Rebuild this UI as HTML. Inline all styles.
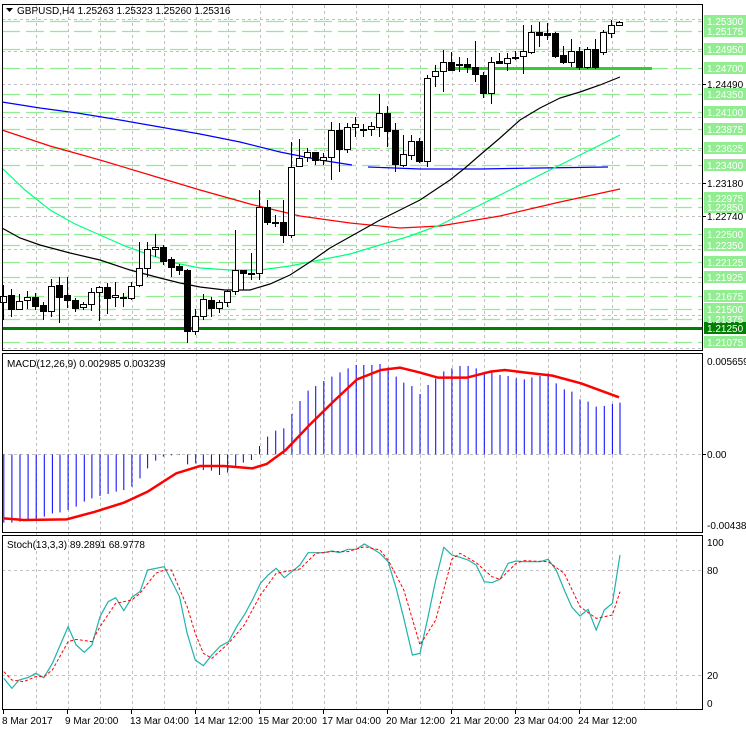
<!DOCTYPE html>
<html><head><meta charset="utf-8"><style>
html,body{margin:0;padding:0;background:#fff;width:746px;height:731px;overflow:hidden}
svg{display:block}
text{font-family:"Liberation Sans",sans-serif;font-size:10px}
</style></head><body>
<svg width="746" height="731" viewBox="0 0 746 731" xmlns="http://www.w3.org/2000/svg">
<rect width="746" height="731" fill="#fff"/>
<g stroke="#c0c0c0" stroke-dasharray="3,3" stroke-width="1">
<path d="M36.5 5V710M68.5 5V710M100.5 5V710M132.5 5V710M164.5 5V710M196.5 5V710M228.5 5V710M260.5 5V710M292.5 5V710M324.5 5V710M356.5 5V710M388.5 5V710M420.5 5V710M452.5 5V710M484.5 5V710M516.5 5V710M548.5 5V710M580.5 5V710M612.5 5V710M644.5 5V710M676.5 5V710"/>
<path d="M2 19.5H703M2 51.5H703M2 84.5H703M2 117.5H703M2 150.5H703M2 183.5H703M2 216.5H703M2 249.5H703M2 282.5H703M2 315.5H703M2 348.5H703"/>
<path d="M2 454.5H703M2 570.5H703M2 675.5H703"/>
</g>
<g stroke="#90ee90" stroke-dasharray="18,6" stroke-width="1.3">
<path d="M2 21.5H703M2 31.5H703M2 49.5H703M2 68.5H703M2 94.5H703M2 112.5H703M2 129.5H703M2 148.5H703M2 165.5H703M2 198.5H703M2 207.5H703M2 234.5H703M2 245.5H703M2 262.5H703M2 277.5H703M2 296.5H703M2 309.5H703M2 319.5H703M2 342.5H703"/>
</g>
<line x1="2" y1="328.5" x2="703" y2="328.5" stroke="#008000" stroke-width="3"/>
<line x1="450" y1="68.5" x2="652" y2="68.5" stroke="#32cd32" stroke-width="3"/>
<g fill="none" stroke-width="1.2">
<polyline stroke="#0000ff" points="2,102 40,108 77,113 120,120 160,127 200,134 240,142 280,152 320,160 352,165"/>
<polyline stroke="#0000ff" points="368,167 420,169 480,169 540,168 608,167"/>
<polyline stroke="#ff0000" points="2,130 50,146 100,160 150,175 200,190 250,204 300,216 350,223 400,228 440,226 500,216 560,202 620,189"/>
<polyline stroke="#00ff7f" points="2,168 25,190 50,210 75,224 100,235 125,246 150,255 175,263 200,268 230,270 260,270 290,266 320,260 350,254 380,245 410,236 440,225 470,210 500,195 530,180 560,165 590,150 620,135"/>
<polyline stroke="#000" points="2,228 20,238 40,245 70,253 100,260 130,270 160,278 180,283 200,287 225,290 250,290 270,284 290,275 310,262 330,248 355,234 380,220 400,210 420,200 435,190 450,180 465,168 480,155 500,138 520,120 540,108 560,98 580,92 600,85 620,77"/>
</g>
<g stroke="#000" stroke-width="1">
<path d="M3.5 285V320M11.5 289V317M19.5 294V310M27.5 291V309M35.5 293V310M43.5 302V320M51.5 279V317M59.5 277V323M67.5 277V308M75.5 298V312M83.5 302V310M91.5 288V311M99.5 286V321M107.5 283V314M115.5 282V307M123.5 293V307M131.5 282V300M139.5 242V287M147.5 242V277M155.5 234V257M163.5 245V265M171.5 257V277M179.5 264V275M187.5 269V343M195.5 309V335M203.5 294V320M211.5 297V317M219.5 300V313M227.5 290V307M235.5 230V295M243.5 270V290M251.5 253V280M259.5 190V280M267.5 200V225M275.5 215V227M283.5 200V243M291.5 142V238M299.5 139V167M307.5 148V162M315.5 152V165M323.5 153V165M331.5 122V180M339.5 123V172M347.5 123V153M355.5 117V137M363.5 124V137M371.5 122V136M379.5 94V137M387.5 106V147M395.5 123V172M403.5 135V167M411.5 135V160M419.5 138V163M427.5 75V167M435.5 65V87M443.5 50V92M451.5 52V70M459.5 57V72M467.5 58V73M475.5 41V82M483.5 72V98M491.5 57V104M499.5 53V63M507.5 53V71M515.5 51V60M523.5 25V74M531.5 25V54M539.5 22V47M547.5 23V40M555.5 32V58M563.5 46V64M571.5 39V67M579.5 47V70M587.5 47V69M595.5 39V69M603.5 30V55M611.5 20V38M619.5 21V26"/>
</g>
<g stroke="#000" stroke-width="1" fill="#fff">
<rect x="0.5" y="296.5" width="6" height="6"/><rect x="16.5" y="301.5" width="6" height="8"/><rect x="24.5" y="297.5" width="6" height="3"/><rect x="80.5" y="304.5" width="6" height="3"/><rect x="88.5" y="292.5" width="6" height="12"/><rect x="96.5" y="287.5" width="6" height="5"/><rect x="112.5" y="295.5" width="6" height="2"/><rect x="120.5" y="297.5" width="6" height="1"/><rect x="128.5" y="286.5" width="6" height="12"/><rect x="136.5" y="268.5" width="6" height="17"/><rect x="144.5" y="249.5" width="6" height="19"/><rect x="152.5" y="247.5" width="6" height="2"/><rect x="192.5" y="316.5" width="6" height="15"/><rect x="200.5" y="299.5" width="6" height="17"/><rect x="216.5" y="302.5" width="6" height="6"/><rect x="224.5" y="291.5" width="6" height="11"/><rect x="232.5" y="270.5" width="6" height="21"/><rect x="248.5" y="273.5" width="6" height="1"/><rect x="256.5" y="207.5" width="6" height="66"/><rect x="288.5" y="167.5" width="6" height="68"/><rect x="296.5" y="158.5" width="6" height="8"/><rect x="304.5" y="152.5" width="6" height="5"/><rect x="320.5" y="157.5" width="6" height="3"/><rect x="328.5" y="130.5" width="6" height="27"/><rect x="344.5" y="127.5" width="6" height="22"/><rect x="352.5" y="124.5" width="6" height="3"/><rect x="360.5" y="129.5" width="6" height="1"/><rect x="368.5" y="126.5" width="6" height="3"/><rect x="376.5" y="113.5" width="6" height="14"/><rect x="400.5" y="154.5" width="6" height="11"/><rect x="408.5" y="141.5" width="6" height="14"/><rect x="424.5" y="78.5" width="6" height="83"/><rect x="432.5" y="71.5" width="6" height="5"/><rect x="440.5" y="62.5" width="6" height="9"/><rect x="456.5" y="64.5" width="6" height="1"/><rect x="488.5" y="62.5" width="6" height="31"/><rect x="504.5" y="58.5" width="6" height="5"/><rect x="512.5" y="57.5" width="6" height="1"/><rect x="520.5" y="51.5" width="6" height="5"/><rect x="528.5" y="32.5" width="6" height="20"/><rect x="568.5" y="51.5" width="6" height="11"/><rect x="584.5" y="49.5" width="6" height="18"/><rect x="600.5" y="32.5" width="6" height="20"/><rect x="608.5" y="25.5" width="6" height="8"/><rect x="616.5" y="22.5" width="6" height="3"/>
</g>
<g stroke="#000" stroke-width="1" fill="#000">
<rect x="8.5" y="295.5" width="6" height="14"/><rect x="32.5" y="297.5" width="6" height="9"/><rect x="40.5" y="305.5" width="6" height="6"/><rect x="48.5" y="286.5" width="6" height="25" fill="#fff"/><rect x="56.5" y="285.5" width="6" height="12"/><rect x="64.5" y="295.5" width="6" height="5"/><rect x="72.5" y="300.5" width="6" height="8"/><rect x="104.5" y="287.5" width="6" height="11"/><rect x="160.5" y="247.5" width="6" height="14"/><rect x="168.5" y="259.5" width="6" height="8"/><rect x="176.5" y="266.5" width="6" height="4"/><rect x="184.5" y="270.5" width="6" height="61"/><rect x="208.5" y="300.5" width="6" height="8"/><rect x="240.5" y="270.5" width="6" height="3"/><rect x="264.5" y="207.5" width="6" height="15"/><rect x="272.5" y="222.5" width="6" height="1"/><rect x="280.5" y="222.5" width="6" height="13"/><rect x="312.5" y="152.5" width="6" height="8"/><rect x="336.5" y="130.5" width="6" height="19"/><rect x="384.5" y="113.5" width="6" height="18"/><rect x="392.5" y="130.5" width="6" height="34"/><rect x="416.5" y="141.5" width="6" height="20"/><rect x="448.5" y="62.5" width="6" height="8"/><rect x="464.5" y="64.5" width="6" height="3"/><rect x="472.5" y="67.5" width="6" height="7"/><rect x="480.5" y="75.5" width="6" height="18"/><rect x="496.5" y="61.5" width="6" height="2"/><rect x="536.5" y="32.5" width="6" height="3"/><rect x="544.5" y="33.5" width="6" height="2"/><rect x="552.5" y="33.5" width="6" height="23"/><rect x="560.5" y="55.5" width="6" height="7"/><rect x="576.5" y="51.5" width="6" height="16"/><rect x="592.5" y="49.5" width="6" height="18"/>
</g>
<g transform="translate(0,340) scale(0.47619,0.33333)" fill="none">
<path vector-effect="non-scaling-stroke" stroke="#0000ff" stroke-width="1" d="M8 343V548M25 343V548M42 343V545M59 343V542M76 343V540M93 343V530M110 343V520M126 343V517M143 343V510M160 343V500M177 343V485M193 343V475M210 343V468M227 343V462M244 343V455M260 343V450M277 343V440M294 343V415M310 343V385M327 343V362M343 343V350M360 343V346M377 343V345M394 343V373M411 343V370M427 343V390M444 343V392M461 343V405M478 343V398M495 343V380M511 343V368M528 343V360M545 343V318M562 343V290M579 343V272M596 343V265M613 343V222M630 343V183M647 343V152M663 343V138M680 343V123M697 343V110M714 343V97M731 343V85M748 343V75M764 343V75M781 343V75M798 343V72M815 343V82M832 343V110M848 343V128M865 343V138M882 343V162M899 343V135M915 343V115M932 343V94M949 343V85M966 343V78M983 343V78M1000 343V85M1017 343V100M1033 343V95M1050 343V105M1067 343V108M1084 343V115M1101 343V118M1117 343V112M1134 343V108M1151 343V100M1168 343V130M1185 343V148M1201 343V155M1218 343V178M1235 343V185M1252 343V200M1269 343V198M1286 343V192M1302 343V188"/>
<polyline vector-effect="non-scaling-stroke" stroke="#ff0000" stroke-width="2.5" points="8,535 50,540 140,538 200,515 260,488 310,455 370,400 420,378 470,378 530,385 560,372 600,330 650,255 700,185 750,118 800,90 840,83 880,97 920,113 980,113 1030,95 1060,90 1100,97 1160,107 1220,130 1300,172"/>
<polyline vector-effect="non-scaling-stroke" stroke="#20b2aa" stroke-width="1.2" points="8,1015 25,1045 40,1020 60,1012 75,1000 92,1013 110,970 143,860 160,915 177,937 193,915 210,830 227,785 243,773 260,812 277,772 294,755 310,690 345,680 377,770 393,880 410,960 427,977 445,945 463,918 480,905 497,860 513,825 530,780 547,730 563,705 580,685 597,713 613,695 630,675 647,638 680,638 697,633 713,638 731,628 748,628 765,612 781,625 798,640 815,665 832,745 848,835 866,945 882,940 899,830 915,720 932,622 949,645 966,652 983,660 1000,675 1017,725 1033,728 1050,718 1067,670 1084,663 1100,665 1134,665 1151,658 1168,690 1185,750 1201,802 1218,828 1235,808 1252,870 1269,810 1286,790 1302,645"/>
<polyline vector-effect="non-scaling-stroke" stroke="#ff0000" stroke-width="1" stroke-dasharray="3,2" points="8,995 25,1020 50,1025 75,1010 92,1010 110,990 143,905 160,898 193,905 210,860 243,790 277,780 294,760 327,700 345,690 360,690 393,800 410,880 427,940 445,955 480,910 513,855 547,765 580,700 630,687 663,640 697,635 731,635 765,620 798,630 815,660 848,750 882,915 915,840 949,658 966,640 1000,668 1033,710 1050,718 1084,670 1100,662 1151,665 1185,700 1218,800 1252,835 1286,825 1302,755"/>
</g>
<g fill="none" stroke="#000" stroke-width="1">
<rect x="2.5" y="4.5" width="700" height="346"/>
<rect x="2.5" y="353.5" width="700" height="179"/>
<rect x="2.5" y="535.5" width="700" height="174"/>
</g>
<g font-size="10">
<g fill="#90ee90"><rect x="704" y="15" width="42" height="12"/><rect x="704" y="25" width="42" height="12"/><rect x="704" y="43" width="42" height="12"/><rect x="704" y="62" width="42" height="12"/><rect x="704" y="88" width="42" height="12"/><rect x="704" y="106" width="42" height="12"/><rect x="704" y="123" width="42" height="12"/><rect x="704" y="142" width="42" height="12"/><rect x="704" y="159" width="42" height="12"/><rect x="704" y="192" width="42" height="12"/><rect x="704" y="201" width="42" height="12"/><rect x="704" y="228" width="42" height="12"/><rect x="704" y="239" width="42" height="12"/><rect x="704" y="256" width="42" height="12"/><rect x="704" y="271" width="42" height="12"/><rect x="704" y="290" width="42" height="12"/><rect x="704" y="303" width="42" height="12"/><rect x="704" y="313" width="42" height="12"/><rect x="704" y="336" width="42" height="12"/></g>
<rect x="704" y="322" width="42" height="12" fill="#008000"/>
<g fill="#fff"><text x="707" y="25">1.25300</text><text x="707" y="35">1.25175</text><text x="707" y="53">1.24950</text><text x="707" y="72">1.24700</text><text x="707" y="98">1.24350</text><text x="707" y="116">1.24100</text><text x="707" y="133">1.23875</text><text x="707" y="152">1.23625</text><text x="707" y="169">1.23400</text><text x="707" y="202">1.22975</text><text x="707" y="211">1.22850</text><text x="707" y="238">1.22500</text><text x="707" y="249">1.22350</text><text x="707" y="266">1.22125</text><text x="707" y="281">1.21925</text><text x="707" y="300">1.21675</text><text x="707" y="313">1.21500</text><text x="707" y="323">1.21375</text><text x="707" y="332">1.21250</text><text x="707" y="346">1.21075</text></g>
<g fill="#000"><text x="707" y="88">1.24490</text><text x="707" y="187">1.23180</text><text x="707" y="220">1.22740</text>
<text x="707" y="365">0.005659</text><text x="707" y="458">0.00</text><text x="707" y="529">-0.004383</text>
<text x="707" y="546">100</text><text x="707" y="574">80</text><text x="707" y="679">20</text><text x="707" y="707">0</text></g>
<g stroke="#000"><path d="M703 84.5h3M703 183.5h3M703 216.5h3M703 454.5h3"/></g>
</g>
<path d="M6 8h7l-3.5 4z" fill="#000"/>
<text x="17" y="14" font-size="10.5" fill="#000">GBPUSD,H4  1.25263 1.25323 1.25260 1.25316</text>
<text x="7" y="367" font-size="10" fill="#000">MACD(12,26,9) 0.002985 0.003239</text>
<text x="7" y="548" font-size="10" fill="#000">Stoch(13,3,3) 89.2891 68.9778</text>
<g fill="#000" font-size="10">
<text x="2" y="724">8 Mar 2017</text><text x="65" y="724">9 Mar 20:00</text><text x="130" y="724">13 Mar 04:00</text><text x="194" y="724">14 Mar 12:00</text><text x="258" y="724">15 Mar 20:00</text><text x="322" y="724">17 Mar 04:00</text><text x="386" y="724">20 Mar 12:00</text><text x="450" y="724">21 Mar 20:00</text><text x="514" y="724">23 Mar 04:00</text><text x="578" y="724">24 Mar 12:00</text>
</g>
<g stroke="#000"><path d="M3.5 710v4M67.5 710v4M131.5 710v4M195.5 710v4M259.5 710v4M323.5 710v4M387.5 710v4M451.5 710v4M515.5 710v4M579.5 710v4"/></g>
</svg>
</body></html>
